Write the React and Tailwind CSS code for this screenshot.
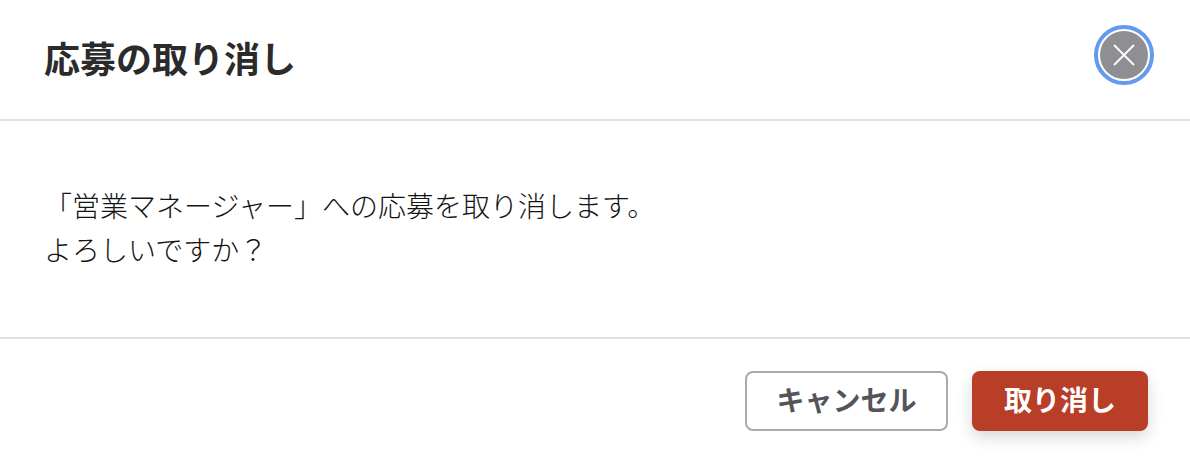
import React from 'react';

function CloseIcon() {
    return (
        <svg width="24" height="24" viewBox="0 0 24 24" fill="none" stroke="#ffffff" strokeWidth="1.8">
            <path d="M2 2 L22 22 M22 2 L2 22" />
        </svg>
    );
}

export default function App() {
    return (
        <div className="w-[1190px] h-[458px] overflow-hidden bg-white text-[#2b2b2b] font-['Inter','Noto_Sans_CJK_JP',sans-serif]">
            <div className="h-[121px] flex items-center justify-between pl-[44px] pr-[36px] border-b-2 border-[#e0e0e0]">
                <h1 className="text-[36px] font-bold">応募の取り消し</h1>
                <button className="mb-[10px] w-[60px] h-[60px] rounded-full border-[4px] border-[#639af0] p-[2px] bg-white">
                    <span className="flex w-full h-full items-center justify-center rounded-full bg-[#8e8e93]">
                        <CloseIcon />
                    </span>
                </button>
            </div>
            <div className="h-[218px] flex flex-col justify-center pl-[44px] border-b-2 border-[#e0e0e0] text-[28px] leading-[44px] font-light text-[#141414]">
                <p>「営業マネージャー」への応募を取り消します。</p>
                <p>よろしいですか？</p>
            </div>
            <div className="flex justify-end gap-[24px] pt-[32px] pr-[42px]">
                <button className="w-[203px] h-[60px] rounded-lg border-2 border-[#a9a9ae] bg-white text-[#555559] text-[28px] font-bold">キャンセル</button>
                <button className="w-[176px] h-[60px] rounded-lg bg-[#b83e28] text-white text-[28px] font-bold shadow-[0_6px_16px_rgba(0,0,0,0.16)]">取り消し</button>
            </div>
        </div>
    );
}
